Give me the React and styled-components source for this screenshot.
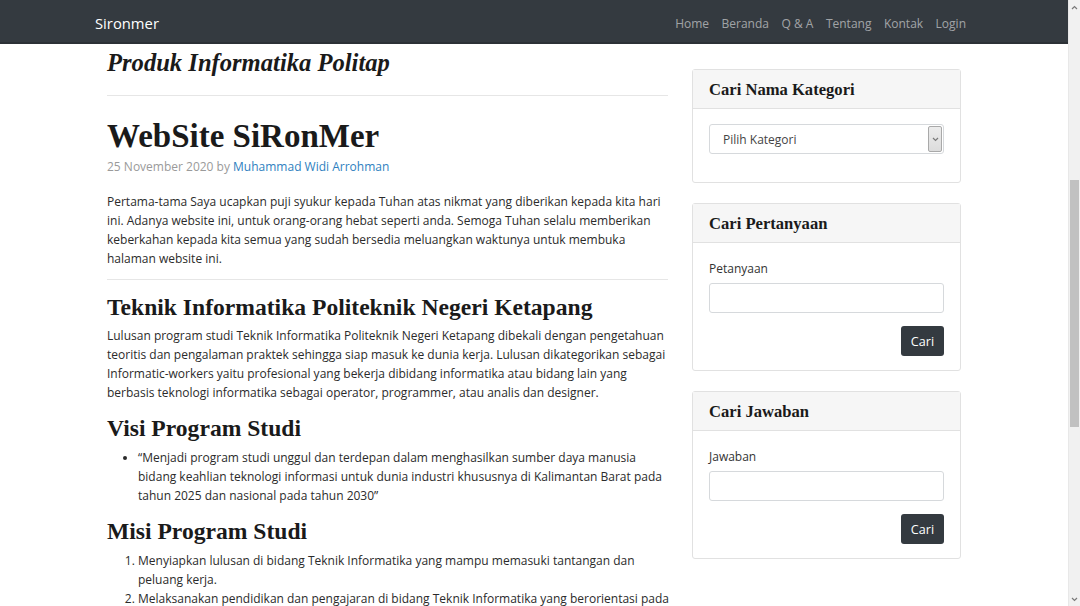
import React from "react";
import styled, { createGlobalStyle } from "styled-components";

const GlobalStyle = createGlobalStyle`
  html, body { margin: 0; padding: 0; height: 100%; overflow: hidden; }
  body {
    font-family: "Open Sans", "Lato", sans-serif;
    font-size: 12px;
    line-height: 19px;
    color: #2b2b2b;
    background: #fff;
  }
  * { box-sizing: border-box; }
`;

const Viewport = styled.div`
  display: flex;
  height: 606px;
  width: 1080px;
`;

const PageArea = styled.div`
  flex: 1;
  min-width: 0;
  display: flex;
  flex-direction: column;
`;

const Navbar = styled.nav`
  height: 44px;
  background: #343a40;
  border-bottom: 2px solid #2c3136;
  display: flex;
  align-items: center;
  justify-content: space-between;
  padding: 4px 102px 0 95px;
  flex-shrink: 0;
`;

const Brand = styled.span`
  color: #fff;
  font-size: 14.8px;
`;

const NavLinks = styled.div`
  display: flex;
  gap: 12.5px;
`;

const NavLink = styled.span`
  color: rgba(255, 255, 255, 0.55);
  font-size: 12px;
`;

const Container = styled.div`
  width: 854px;
  margin: 0 auto;
  display: flex;
  gap: 24px;
  align-items: flex-start;
`;

const Main = styled.main`
  width: 561px;
  padding-top: 4px;
`;

const serif = `"Liberation Serif", "DejaVu Serif", serif`;

const PageTitle = styled.h1`
  margin: 0;
  font-family: ${serif};
  font-style: italic;
  font-weight: 700;
  font-size: 24.6px;
  line-height: 30px;
  color: #1a1a1a;
`;

const Rule = styled.hr`
  border: 0;
  border-top: 1px solid #e6e6e6;
  margin: ${(p) => p.$top}px 0 0 0;
`;

const PostTitle = styled.h2`
  margin: 20px 0 0 0;
  font-family: ${serif};
  font-weight: 700;
  font-size: 33px;
  line-height: 40px;
  color: #1a1a1a;
`;

const Meta = styled.div`
  margin-top: 1px;
  color: #9a9a9a;
`;

const Author = styled.a`
  color: #2f7fc0;
  text-decoration: none;
`;

const Para = styled.p`
  margin: ${(p) => p.$top}px 0 0 0;
  white-space: nowrap;
`;

const Heading = styled.h3`
  margin: ${(p) => p.$top}px 0 0 0;
  font-family: ${serif};
  font-weight: 700;
  font-size: 23.6px;
  line-height: 29px;
  color: #1a1a1a;
`;

const List = styled.ul`
  margin: 5px 0 0 0;
  padding-left: 31px;
  white-space: nowrap;
`;

const OList = styled.ol`
  margin: 5px 0 0 0;
  padding-left: 31px;
  white-space: nowrap;
`;

const Sidebar = styled.aside`
  width: 269px;
  padding-top: 25px;
  display: flex;
  flex-direction: column;
  gap: 20px;
`;

const Card = styled.section`
  border: 1px solid #e1e1e1;
  border-radius: 3px;
  background: #fff;
`;

const CardHeader = styled.div`
  background: #f6f6f6;
  border-bottom: 1px solid #e1e1e1;
  padding: 9px 16px 8px;
  font-family: ${serif};
  font-weight: 700;
  font-size: 16.6px;
  line-height: 21px;
  color: #1a1a1a;
`;

const CardBody = styled.div`
  padding: ${(p) => p.$top}px 16px ${(p) => p.$bottom}px;
  display: flex;
  flex-direction: column;
`;

const Label = styled.label`
  display: block;
  margin-bottom: 5px;
  color: #333;
`;

const Input = styled.div`
  height: 30px;
  border: 1px solid #d6d9dc;
  border-radius: 3px;
  background: #fff;
`;

const Select = styled.div`
  height: 30px;
  border: 1px solid #d6d9dc;
  border-radius: 3px;
  background: #fff;
  display: flex;
  align-items: stretch;
  padding: 1px;
`;

const SelectText = styled.span`
  flex: 1;
  padding-left: 12px;
  display: flex;
  align-items: center;
  color: #444;
`;

const SelectArrow = styled.span`
  width: 14px;
  background: linear-gradient(#ececec, #dcdcdc);
  border: 1px solid #a9a9a9;
  border-radius: 2px;
  display: flex;
  align-items: center;
  justify-content: center;
`;

const ButtonRow = styled.div`
  display: flex;
  justify-content: flex-end;
  margin-top: 13px;
`;

const Button = styled.button`
  height: 30px;
  width: 43px;
  padding: 0;
  background: #343a40;
  color: #fff;
  border: 0;
  border-radius: 3px;
  font-family: inherit;
  font-size: 12.6px;
`;

const Scrollbar = styled.div`
  width: 12px;
  background: #f1f1f1;
  border-left: 1px solid #e8e8e8;
  display: flex;
  flex-direction: column;
  align-items: center;
  flex-shrink: 0;
`;

const ScrollArrow = styled.div`
  height: 14px;
  display: flex;
  align-items: center;
  justify-content: center;
`;

const ScrollTrack = styled.div`
  flex: 1;
  width: 100%;
  display: flex;
  flex-direction: column;
  padding-top: 166px;
`;

const ScrollThumb = styled.div`
  height: 247px;
  margin: 0 1px;
  background: #c1c1c1;
`;

const Chevron = ({ up }) => (
  <svg width="7" height="5" viewBox="0 0 7 5">
    <path
      d={up ? "M1 4 L3.5 1.5 L6 4" : "M1 1 L3.5 3.5 L6 1"}
      fill="none"
      stroke="#7a7a7a"
      strokeWidth="1.2"
    />
  </svg>
);

const Lines = ({ lines }) =>
  lines.map((l, i) => (
    <React.Fragment key={i}>
      {i > 0 && <br />}
      {l}
    </React.Fragment>
  ));

const intro = [
  "Pertama-tama Saya ucapkan puji syukur kepada Tuhan atas nikmat yang diberikan kepada kita hari",
  "ini. Adanya website ini, untuk orang-orang hebat seperti anda. Semoga Tuhan selalu memberikan",
  "keberkahan kepada kita semua yang sudah bersedia meluangkan waktunya untuk membuka",
  "halaman website ini.",
];

const teknik = [
  "Lulusan program studi Teknik Informatika Politeknik Negeri Ketapang dibekali dengan pengetahuan",
  "teoritis dan pengalaman praktek sehingga siap masuk ke dunia kerja. Lulusan dikategorikan sebagai",
  "Informatic-workers yaitu profesional yang bekerja dibidang informatika atau bidang lain yang",
  "berbasis teknologi informatika sebagai operator, programmer, atau analis dan designer.",
];

const visi = [
  "“Menjadi program studi unggul dan terdepan dalam menghasilkan sumber daya manusia",
  "bidang keahlian teknologi informasi untuk dunia industri khususnya di Kalimantan Barat pada",
  "tahun 2025 dan nasional pada tahun 2030”",
];

const misi = [
  ["Menyiapkan lulusan di bidang Teknik Informatika yang mampu memasuki tantangan dan", "peluang kerja."],
  ["Melaksanakan pendidikan dan pengajaran di bidang Teknik Informatika yang berorientasi pada"],
];

const SearchCard = ({ title, label }) => (
  <Card>
    <CardHeader>{title}</CardHeader>
    <CardBody $top={16} $bottom={14}>
      <Label>{label}</Label>
      <Input />
      <ButtonRow>
        <Button>Cari</Button>
      </ButtonRow>
    </CardBody>
  </Card>
);

export default function App() {
  return (
    <>
      <GlobalStyle />
      <Viewport>
        <PageArea>
          <Navbar>
            <Brand>Sironmer</Brand>
            <NavLinks>
              {["Home", "Beranda", "Q & A", "Tentang", "Kontak", "Login"].map((l) => (
                <NavLink key={l}>{l}</NavLink>
              ))}
            </NavLinks>
          </Navbar>
          <Container>
            <Main>
              <PageTitle>Produk Informatika Politap</PageTitle>
              <Rule $top={17} />
              <PostTitle>WebSite SiRonMer</PostTitle>
              <Meta>
                25 November 2020 by <Author>Muhammad Widi Arrohman</Author>
              </Meta>
              <Para $top={16}>
                <Lines lines={intro} />
              </Para>
              <Rule $top={11} />
              <Heading $top={13}>Teknik Informatika Politeknik Negeri Ketapang</Heading>
              <Para $top={4}>
                <Lines lines={teknik} />
              </Para>
              <Heading $top={12}>Visi Program Studi</Heading>
              <List>
                <li>
                  <Lines lines={visi} />
                </li>
              </List>
              <Heading $top={12}>Misi Program Studi</Heading>
              <OList>
                {misi.map((m, i) => (
                  <li key={i}>
                    <Lines lines={m} />
                  </li>
                ))}
              </OList>
            </Main>
            <Sidebar>
              <Card>
                <CardHeader>Cari Nama Kategori</CardHeader>
                <CardBody $top={15} $bottom={28}>
                  <Select>
                    <SelectText>Pilih Kategori</SelectText>
                    <SelectArrow>
                      <Chevron />
                    </SelectArrow>
                  </Select>
                </CardBody>
              </Card>
              <SearchCard title="Cari Pertanyaan" label="Petanyaan" />
              <SearchCard title="Cari Jawaban" label="Jawaban" />
            </Sidebar>
          </Container>
        </PageArea>
        <Scrollbar>
          <ScrollArrow>
            <Chevron up />
          </ScrollArrow>
          <ScrollTrack>
            <ScrollThumb />
          </ScrollTrack>
          <ScrollArrow>
            <Chevron />
          </ScrollArrow>
        </Scrollbar>
      </Viewport>
    </>
  );
}
